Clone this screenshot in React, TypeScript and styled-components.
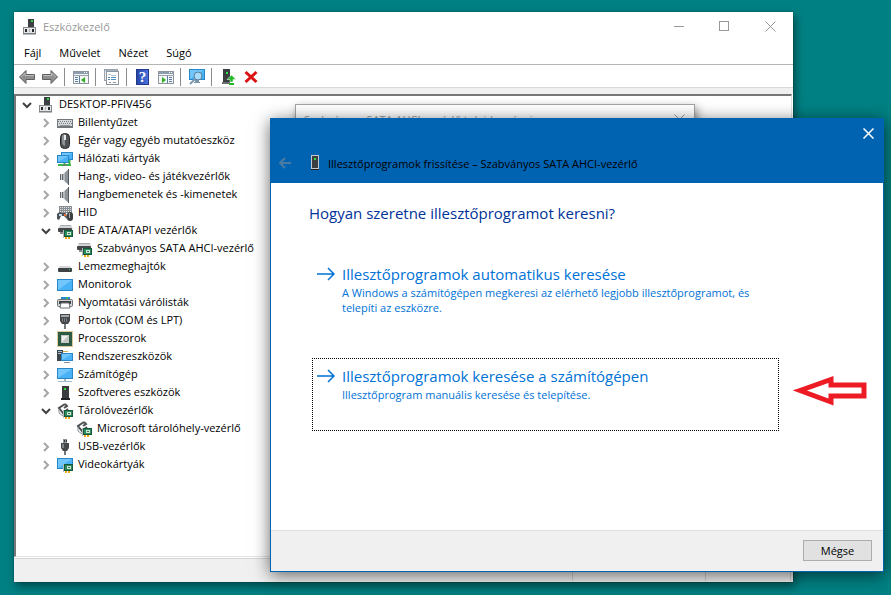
import React from "react";
import styled, { createGlobalStyle, css } from "styled-components";

const GlobalStyle = createGlobalStyle`
  * { box-sizing: border-box; }
  body {
    margin: 0;
    font-family: "Open Sans", "Noto Sans", sans-serif;
    font-size: 11px;
    color: #000;
  }
  button {
    font: inherit;
    color: inherit;
    background: none;
    border: 0;
    padding: 0;
    margin: 0;
  }
`;

/* ---------- icons ---------- */

const Svg = styled.svg`
  display: block;
  flex: none;
`;

const Chip = () => (
  <>
    <path d="M6.500 7v8" stroke="#b4b9bd" />
    <rect x="7" y="7" width="9" height="7" fill="#17573b" />
    <rect x="8" y="8" width="7" height="5" fill="#2b8a5a" />
    <rect x="10" y="9" width="4" height="3" fill="#cfe6d9" />
    <rect x="11" y="10" width="2" height="1" fill="#3f6f57" />
    <path d="M8 14h2v2H8zM11 14h2v2h-2z" fill="#f3a712" />
  </>
);

const Pc = () => (
  <>
    <rect x="6" y="0" width="6" height="8" fill="#3c3f41" />
    <rect x="9" y="1" width="2" height="2" fill="#35d04a" />
    <path d="M1 8h13v2H1z" fill="#b9bcbf" />
    <rect x="1.500" y="8.500" width="12" height="6" fill="#e4e6e8" stroke="#85898c" />
    <path d="M3 10h2v3H3zM10 10h2v3h-2z" fill="#26282a" />
    <path d="M7 10h1v3H7z" fill="#a6a9ab" />
    <path d="M1 15h13" stroke="#77797b" />
  </>
);

const Screen = ({ x, y, w, h }: { x: number; y: number; w: number; h: number }) => (
  <>
    <rect x={x} y={y} width={w} height={h} fill="#2787c9" />
    <rect x={x + 1} y={y + 1} width={w - 2} height={h - 2} fill="#49b1f5" />
    <path d={`M${x + 1} ${y + 1}h${w - 2}L${x + 1} ${y + h - 1}z`} fill="#72c6fb" />
  </>
);

const Drive = () => (
  <>
    <path d="M3 2h11l2 4H1z" fill="#d2d4d6" />
    <path d="M3 2.500h11" stroke="#a9acaf" />
    <rect x="1" y="5" width="14" height="4" rx="1" fill="#43474a" />
    <path d="M3 9h3v2H3z" fill="#8a8e91" />
  </>
);

const Speaker = () => (
  <>
    <path d="M3 5h3v6H3z" fill="#5f6569" />
    <path d="M6 5l5-4v14l-5-4z" fill="#b3b8bb" />
    <path d="M8 3.500L12 0v16l-4-3.500z" fill="#8d9397" />
    <path d="M11 0h1v16h-1z" fill="#565c60" />
    <path d="M4.500 5v6" stroke="#cfd3d5" />
  </>
);

const Storage = () => (
  <>
    <path d="M8 1L2 5l4 5 5-4M8 1l2 2-3 2" fill="none" stroke="#4e5254" strokeWidth="2" />
    <path d="M2 6v4l4 3" fill="none" stroke="#8a8e91" strokeWidth="1" />
    <Chip />
  </>
);

const Grille = ({ flip }: { flip?: boolean }) => (
  <>
    <rect x="0.500" y="2.500" width="15" height="12" fill="#f4f6f8" stroke="#8c959e" />
    <path d="M1 3h14v2H1z" fill="#8c9db0" />
    <path d="M11 3h1v1h-1zM13 3h1v1h-1z" fill="#fff" />
    <path d="M1 6.500h14" stroke="#9aa3ab" />
    {flip ? (
      <>
        <path d="M9.500 7v7M11 8.500h3M11 10.500h3M11 12.500h3" stroke="#5d7ea3" />
        <path d="M4 8l4 3-4 3z" fill="#2fae1f" />
      </>
    ) : (
      <>
        <path d="M6.500 7v7M2 8.500h3M2 10.500h3M2 12.500h3" stroke="#5d7ea3" />
        <path d="M12 8l-4 3 4 3z" fill="#2fae1f" />
      </>
    )}
  </>
);

const drawings: Record<string, React.ReactNode> = {
  pc: <Pc />,
  keyboard: (
    <>
      <rect x="0" y="4" width="16" height="9" fill="#72777b" />
      <rect x="1" y="5" width="14" height="6" fill="#d7dadc" />
      <path d="M1 6.500h14M2 8.500h13" stroke="#747a7e" strokeDasharray="1 1" />
      <path d="M3 10.500h10" stroke="#8f9498" />
    </>
  ),
  mouse: (
    <>
      <rect x="3.500" y="0.500" width="9" height="15" rx="4" fill="#4f5356" stroke="#26292b" />
      <path d="M5 3q1-2 3-2v12q-2 0-3-3z" fill="#8d9295" />
      <rect x="7" y="2" width="2" height="5" fill="#e6e8e9" />
    </>
  ),
  network: (
    <>
      <Screen x={4} y={1} w={12} h={8} />
      <Screen x={0} y={4} w={12} h={8} />
      <path d="M1 14h13M7.500 12v3M12.500 9v5" stroke="#38b54a" strokeWidth="2" />
      <path d="M6 13h4v2H6z" fill="#5e8f66" />
    </>
  ),
  sound: <Speaker />,
  hid: (
    <>
      <rect x="2" y="1" width="13" height="7" fill="#888d91" />
      <path d="M3 2.500h12M3 4.500h12M3 6.500h12" stroke="#e4e6e7" strokeDasharray="1 1" />
      <path d="M0 14V9q2-3 5-1h3q2 0 2 6l-3-3H4l-2 4z" fill="#4b5154" />
      <path d="M2 9h3v2H2z" fill="#b8d7ef" />
      <path d="M7 9h2v2H7z" fill="#e86e2f" />
      <rect x="10" y="7" width="6" height="9" rx="3" fill="#3c4042" />
      <path d="M12 8h1v5h-1z" fill="#a7acaf" />
    </>
  ),
  ide: (
    <>
      <Drive />
      <Chip />
    </>
  ),
  disk: (
    <>
      <path d="M3 7h10l2 3H1z" fill="#d4d6d8" />
      <rect x="1" y="9" width="14" height="4" rx="1" fill="#3e4244" />
      <rect x="12" y="10" width="1" height="1" fill="#37d64d" />
    </>
  ),
  monitor: <Screen x={0} y={2} w={16} h={12} />,
  printer: (
    <>
      <path d="M4 2h9v3H4z" fill="#2485d4" />
      <path d="M9 2h2v3H9z" fill="#36b765" />
      <rect x="0.500" y="4.500" width="15" height="7" rx="1" fill="#cfd2d4" stroke="#6e7376" />
      <path d="M2 6h12v3H2z" fill="#3b3f42" />
      <path d="M4 8h8l1 5H3z" fill="#fff" stroke="#6e7376" />
    </>
  ),
  port: (
    <>
      <path d="M3 1h10v7l-2 3H5L3 8z" fill="#44484b" />
      <path d="M4 2h8v2H4z" fill="#a3a8ab" />
      <path d="M5 5h1v4H5zM7 5h1v4H7zM9 5h1v4H9z" fill="#777c80" />
      <path d="M7 11h2v5H7z" fill="#767b7e" />
    </>
  ),
  cpu: (
    <>
      <rect x="0.500" y="0.500" width="15" height="15" fill="none" stroke="#b8973b" strokeDasharray="1 1" />
      <rect x="1" y="1" width="14" height="14" fill="#2c5a42" />
      <rect x="4" y="4" width="8" height="8" fill="#c5c9c5" />
      <path d="M5 5h6L5 11z" fill="#eef0ee" />
    </>
  ),
  system: (
    <>
      <path d="M0 1h6v11H0z" fill="#3f464b" />
      <path d="M1 2h4v1H1zM1 4h4v1H1z" fill="#a9c0d0" />
      <path d="M6 2h5v1H6z" fill="#d1b056" />
      <Screen x={4} y={4} w={12} h={8} />
      <path d="M7 13.500h6" stroke="#879199" />
    </>
  ),
  computer: (
    <>
      <Screen x={0} y={1} w={16} h={11} />
      <path d="M7 12h2v2H7z" fill="#a9b6c0" />
      <path d="M1 14.500h14" stroke="#a3bdd0" />
    </>
  ),
  tower: (
    <>
      <rect x="5" y="1" width="7" height="12" fill="#383c3e" />
      <rect x="7" y="3" width="2" height="2" fill="#35dd3c" />
      <path d="M4 13h9v2H4z" fill="#202224" />
    </>
  ),
  storage: <Storage />,
  usb: (
    <>
      <path d="M6 0h4v5H6z" fill="#8e9396" />
      <path d="M7 1h1v2H7zM9 1h1v2H9z" fill="#2e3234" />
      <path d="M4 4h8v5l-2 3H6L4 9z" fill="#44484b" />
      <path d="M5 5h2v4H5z" fill="#7e8386" />
      <path d="M7 12h2v4H7z" fill="#707578" />
    </>
  ),
  video: (
    <>
      <Screen x={0} y={1} w={16} h={11} />
      <Chip />
    </>
  ),
  back: (
    <>
      <path d="M0.500 8L7 1.500v4h8.500v5H7v4z" fill="#8f8f8f" stroke="#5e5e5e" />
      <path d="M2 8l4-4v2.500h9" fill="none" stroke="#bdbdbd" />
    </>
  ),
  forward: (
    <>
      <path d="M15.500 8L9 1.500v4H0.500v5H9v4z" fill="#8f8f8f" stroke="#5e5e5e" />
      <path d="M1 6.500h8.500V4l4 4" fill="none" stroke="#bdbdbd" />
    </>
  ),
  pane: <Grille />,
  paneRight: <Grille flip />,
  properties: (
    <>
      <rect x="0.500" y="0.500" width="13" height="11" fill="#eef1f4" stroke="#9ba2a9" />
      <path d="M1 1.500h12" stroke="#9fb2c6" />
      <rect x="2.500" y="2.500" width="12" height="13" fill="#fff" stroke="#8d949b" />
      <path d="M4 5h3v1H4zM7 6h5v1H7z" fill="#b5bfc9" />
      <path d="M4 8h2v1H4zM7 8h5v1H7zM4 10h2v1H4zM7 10h5v1H7z" fill="#4f8fbf" />
      <path d="M5 13h2v1H5zM9 13h3v1H9z" fill="#8a949c" />
    </>
  ),
  scan: (
    <>
      <Screen x={0} y={0} w={16} h={11} />
      <path d="M6 11h4v2H6z" fill="#7a96aa" />
      <path d="M5 13.500h6" stroke="#7a96aa" />
      <circle cx="9" cy="7" r="4" fill="#a9dcfb" stroke="#5a7f99" />
      <path d="M6 10L1 15" stroke="#7c99ae" strokeWidth="2" />
    </>
  ),
  update: (
    <>
      <rect x="3" y="0" width="7" height="13" fill="#393d3f" />
      <rect x="6" y="3" width="2" height="2" fill="#33e03c" />
      <path d="M2 13h8v2H2z" fill="#6a6e70" />
      <path d="M11.500 6L16 10.500h-3V13h-3v-2.500H7z" fill="#23b825" stroke="#fff" strokeWidth="0.500" />
      <path d="M9 14h5v2H9z" fill="#23b825" />
    </>
  ),
  remove: <path d="M2.500 3l11 10M13.500 3l-11 10" stroke="#dc1212" strokeWidth="3" />,
};

const Icon = ({ name }: { name: string }) => (
  <Svg width="16" height="16" viewBox="0 0 16 16" aria-hidden="true">
    {drawings[name]}
  </Svg>
);

const HelpBadge = styled.span`
  width: 13px;
  height: 16px;
  background: linear-gradient(90deg, #2747a8, #4a72dc);
  border: 1px solid #23398a;
  color: #fff;
  font: bold 15px/14px "Liberation Serif", serif;
  text-align: center;
`;

const CloseGlyph = ({ bold }: { bold?: boolean }) => (
  <Svg width="11" height="11" viewBox="0 0 11 11" aria-hidden="true">
    <path d="M0.500 0.500l10 10M10.500 0.500l-10 10" stroke="currentColor" strokeWidth={bold ? 1.5 : 1} />
  </Svg>
);

/* ---------- windows ---------- */

const Desktop = styled.main`
  position: relative;
  min-height: 100vh;
  overflow: hidden;
  background: #008083;
`;

const Manager = styled.section`
  position: absolute;
  inset: 12px 98px 13px 14px;
  display: flex;
  flex-direction: column;
  background: #fff;
  box-shadow: 0 0 1px #0008, 2px 4px 9px #0007;
`;

const TitleBar = styled.header`
  display: flex;
  align-items: center;
  height: 29px;
  padding-left: 8px;
  color: #999;
`;

const Caption = styled.h1`
  flex: 1;
  margin: 0 0 0 5px;
  font-size: 11px;
  font-weight: 400;
  white-space: nowrap;
`;

const WindowButton = styled.button`
  display: flex;
  align-items: center;
  justify-content: center;
  width: 45px;
  height: 29px;
  &:last-child { width: 46px; }
`;

const MenuBar = styled.nav`
  display: flex;
  height: 24px;
  padding-left: 1px;
  border-bottom: 1px solid #b4b4b4;
`;

const MenuItem = styled.button`
  padding: 0 9px;
`;

const Toolbar = styled.div`
  display: flex;
  align-items: center;
  height: 23px;
  padding: 2px 0 0 1px;
  border-bottom: 1px solid #d9d9d9;
`;

const ToolButton = styled.button`
  display: flex;
  align-items: center;
  justify-content: center;
  width: 23px;
  height: 20px;
`;

const ToolDivider = styled.span`
  width: 1px;
  height: 18px;
  margin: 0 4px 0 3px;
  background: #8c8c8c;
`;

const Backdrop = styled.div`
  flex: 1;
  min-height: 0;
  display: flex;
  flex-direction: column;
  background: linear-gradient(#f0f0f0 0 6px, #fff 6px);
`;

const TreeFrame = styled.div`
  flex: 1;
  min-height: 0;
  overflow: hidden;
  margin: 6px 1px 0 0;
  border: 1px solid #e3e3e3;
  border-top: 2px solid #777;
  border-left: 2px solid #777;
`;

const Tree = styled.ul`
  list-style: none;
  margin: 0;
  padding: 0;
`;

const TreeRow = styled.li<{ $level: number }>`
  display: flex;
  align-items: center;
  height: 18px;
  padding-left: ${(p) => 2 + p.$level * 19}px;
  white-space: nowrap;
`;

const Expander = styled.button`
  display: flex;
  justify-content: center;
  width: 18px;
  margin-right: 2px;
`;

const ExpanderGap = styled.span`
  width: 20px;
`;

const TreeLabel = styled.span`
  margin-left: 5px;
  padding-bottom: 2px;
  line-height: 16px;
`;

const StatusBar = styled.footer`
  display: flex;
  height: 24px;
  margin-top: 1px;
  background: #f0f0f0;
  border-top: 1px solid #d7d7d7;
`;

const StatusCell = styled.span<{ $width?: number }>`
  ${(p) => (p.$width ? css`width: ${p.$width}px;` : css`flex: 1;`)}
  margin-bottom: 1px;
  border-right: 1px solid #d0d0d0;
`;

const StatusEnd = styled.span`
  width: 2px;
`;

const Properties = styled.section`
  position: absolute;
  inset: 104px 196px 60px 295px;
  background: #fff;
  border: 1px solid #a3a3a3;
  box-shadow: 2px 4px 9px #0007;
`;

const PropertiesTitle = styled.div`
  display: flex;
  align-items: center;
  justify-content: space-between;
  height: 29px;
  padding: 0 9px 0 8px;
  color: #999;
  white-space: nowrap;
`;

const Wizard = styled.section`
  position: absolute;
  inset: 118px 7px 23px 270px;
  display: flex;
  flex-direction: column;
  background: #fff;
  border: 1px solid #0063b1;
  box-shadow: 0 3px 16px #0009;
`;

const WizardHeader = styled.header`
  background: #0063b1;
  height: 64px;
`;

const WizardTop = styled.div`
  display: flex;
  justify-content: flex-end;
  height: 28px;
  color: #fff;
`;

const WizardClose = styled.button`
  display: flex;
  align-items: center;
  justify-content: center;
  width: 29px;
`;

const WizardTitleRow = styled.div`
  display: flex;
  align-items: center;
  height: 32px;
  padding-left: 8px;
`;

const WizardIcon = styled.span`
  display: flex;
  margin: 0 8px 0 20px;
`;

const WizardTitle = styled.h2`
  margin: 0;
  font-size: 11px;
  font-weight: 400;
  white-space: nowrap;
`;

const WizardBody = styled.div`
  flex: 1;
  padding: 19px 104px 0 38px;
`;

const Question = styled.h3`
  margin: 0 0 32px;
  font-size: 15px;
  line-height: 22px;
  font-weight: 400;
  color: #003399;
`;

const Choice = styled.button<{ $focused?: boolean }>`
  display: grid;
  grid-template-columns: 25px 1fr;
  align-content: start;
  width: calc(100% - 3px);
  min-height: 73px;
  margin: 0 0 29px 3px;
  padding: 6px 4px;
  border: 1px dotted ${(p) => (p.$focused ? "#000" : "transparent")};
  color: #0072d6;
  text-align: left;
  outline: none;
`;

const ChoiceTitle = styled.span`
  font-size: 15px;
  line-height: 22px;
`;

const ChoiceText = styled.span`
  grid-column: 2;
  line-height: 15px;
`;

const ChoiceArrow = styled(Svg)`
  align-self: center;
`;

const WizardFooter = styled.footer`
  display: flex;
  align-items: center;
  justify-content: flex-end;
  height: 41px;
  padding: 0 11px 2px 0;
  background: #f0f0f0;
  border-top: 1px solid #dfdfdf;
`;

const CancelButton = styled.button`
  width: 69px;
  height: 21px;
  background: #e1e1e1;
  border: 1px solid #adadad;
`;

const Pointer = styled(Svg)`
  position: absolute;
  top: 256px;
  right: 15px;
`;

type Node = { label: string; icon: string; level: number; open?: boolean; leaf?: boolean };

const nodes: Node[] = [
  { label: "DESKTOP-PFIV456", icon: "pc", level: 0, open: true },
  { label: "Billentyűzet", icon: "keyboard", level: 1 },
  { label: "Egér vagy egyéb mutatóeszköz", icon: "mouse", level: 1 },
  { label: "Hálózati kártyák", icon: "network", level: 1 },
  { label: "Hang-, video- és játékvezérlők", icon: "sound", level: 1 },
  { label: "Hangbemenetek és -kimenetek", icon: "sound", level: 1 },
  { label: "HID", icon: "hid", level: 1 },
  { label: "IDE ATA/ATAPI vezérlők", icon: "ide", level: 1, open: true },
  { label: "Szabványos SATA AHCI-vezérlő", icon: "ide", level: 2, leaf: true },
  { label: "Lemezmeghajtók", icon: "disk", level: 1 },
  { label: "Monitorok", icon: "monitor", level: 1 },
  { label: "Nyomtatási várólisták", icon: "printer", level: 1 },
  { label: "Portok (COM és LPT)", icon: "port", level: 1 },
  { label: "Processzorok", icon: "cpu", level: 1 },
  { label: "Rendszereszközök", icon: "system", level: 1 },
  { label: "Számítógép", icon: "computer", level: 1 },
  { label: "Szoftveres eszközök", icon: "tower", level: 1 },
  { label: "Tárolóvezérlők", icon: "storage", level: 1, open: true },
  { label: "Microsoft tárolóhely-vezérlő", icon: "storage", level: 2, leaf: true },
  { label: "USB-vezérlők", icon: "usb", level: 1 },
  { label: "Videokártyák", icon: "video", level: 1 },
];

const tools = [
  ["back", "Vissza"],
  ["forward", "Előre"],
  null,
  ["pane", "Konzolfa"],
  null,
  ["properties", "Tulajdonságok"],
  null,
  ["help", "Súgó"],
  ["paneRight", "Műveletpanel"],
  null,
  ["scan", "Hardverváltozások keresése"],
  null,
  ["update", "Illesztőprogram frissítése"],
  ["remove", "Eszköz eltávolítása"],
];

const Chevron = ({ open }: { open?: boolean }) => (
  <Svg width="10" height="10" viewBox="0 0 10 10" aria-hidden="true">
    {open ? (
      <path d="M1 3l4 4 4-4" fill="none" stroke="#404040" strokeWidth="2" />
    ) : (
      <path d="M3 1l4 4-4 4" fill="none" stroke="#a6a6a6" strokeWidth="2" />
    )}
  </Svg>
);

const RightArrow = () => (
  <ChoiceArrow width="18" height="14" viewBox="0 0 18 14" aria-hidden="true">
    <path d="M0 7h17M11 1l6 6-6 6" fill="none" stroke="#0072d6" strokeWidth="1.500" />
  </ChoiceArrow>
);

export default function App() {
  return (
    <Desktop>
      <GlobalStyle />
      <Manager>
        <TitleBar>
          <Icon name="pc" />
          <Caption>Eszközkezelő</Caption>
          <WindowButton aria-label="Kis méret">
            <Svg width="11" height="11" viewBox="0 0 11 11">
              <path d="M0 5.500h10" stroke="currentColor" />
            </Svg>
          </WindowButton>
          <WindowButton aria-label="Teljes méret">
            <Svg width="11" height="11" viewBox="0 0 11 11">
              <rect x="0.500" y="0.500" width="9" height="9" fill="none" stroke="currentColor" />
            </Svg>
          </WindowButton>
          <WindowButton aria-label="Bezárás">
            <CloseGlyph />
          </WindowButton>
        </TitleBar>
        <MenuBar>
          <MenuItem>Fájl</MenuItem>
          <MenuItem>Művelet</MenuItem>
          <MenuItem>Nézet</MenuItem>
          <MenuItem>Súgó</MenuItem>
        </MenuBar>
        <Toolbar>
          {tools.map((tool, i) =>
            tool ? (
              <ToolButton key={i} aria-label={tool[1]}>
                {tool[0] === "help" ? <HelpBadge>?</HelpBadge> : <Icon name={tool[0]} />}
              </ToolButton>
            ) : (
              <ToolDivider key={i} />
            )
          )}
        </Toolbar>
        <Backdrop>
          <TreeFrame>
            <Tree>
              {nodes.map((node) => (
                <TreeRow key={node.label} $level={node.level}>
                  {node.leaf ? (
                    <ExpanderGap />
                  ) : (
                    <Expander aria-label={node.label} aria-expanded={!!node.open}>
                      <Chevron open={node.open} />
                    </Expander>
                  )}
                  <Icon name={node.icon} />
                  <TreeLabel>{node.label}</TreeLabel>
                </TreeRow>
              ))}
            </Tree>
          </TreeFrame>
        </Backdrop>
        <StatusBar>
          <StatusCell />
          <StatusCell $width={133} />
          <StatusCell $width={85} />
          <StatusEnd />
        </StatusBar>
      </Manager>

      <Properties>
        <PropertiesTitle>
          <span>Szabványos SATA AHCI-vezérlő tulajdonságai</span>
          <button aria-label="Tulajdonságok bezárása">
            <CloseGlyph />
          </button>
        </PropertiesTitle>
      </Properties>

      <Wizard>
        <WizardHeader>
          <WizardTop>
            <WizardClose aria-label="Varázsló bezárása">
              <CloseGlyph bold />
            </WizardClose>
          </WizardTop>
          <WizardTitleRow>
            <button aria-label="Előző lap">
              <Svg width="12" height="12" viewBox="0 0 12 12">
                <path d="M12 6H1M6 1L1 6l5 5" fill="none" stroke="#4a7ba3" strokeWidth="2" />
              </Svg>
            </button>
            <WizardIcon>
              <Svg width="9" height="16" viewBox="0 0 9 16">
                <rect x="0.500" y="0.500" width="7" height="13" fill="#3b3f41" stroke="#c3c9cd" />
                <rect x="3" y="3" width="2" height="2" fill="#35e03c" />
                <path d="M0 14h8v1H0z" fill="#1f2224" />
              </Svg>
            </WizardIcon>
            <WizardTitle>Illesztőprogramok frissítése – Szabványos SATA AHCI-vezérlő</WizardTitle>
          </WizardTitleRow>
        </WizardHeader>
        <WizardBody>
          <Question>Hogyan szeretne illesztőprogramot keresni?</Question>
          <Choice>
            <RightArrow />
            <ChoiceTitle>Illesztőprogramok automatikus keresése</ChoiceTitle>
            <ChoiceText>
              A Windows a számítógépen megkeresi az elérhető legjobb illesztőprogramot, és telepíti az eszközre.
            </ChoiceText>
          </Choice>
          <Choice $focused>
            <RightArrow />
            <ChoiceTitle>Illesztőprogramok keresése a számítógépen</ChoiceTitle>
            <ChoiceText>Illesztőprogram manuális keresése és telepítése.</ChoiceText>
          </Choice>
        </WizardBody>
        <WizardFooter>
          <CancelButton>Mégse</CancelButton>
        </WizardFooter>
        <Pointer width="75" height="31" viewBox="0 0 75 31" aria-hidden="true">
          <path
            d="M7 15.500L38 4.500V10h33v11H38v6z"
            fill="none"
            stroke="#ed1c24"
            strokeWidth="5"
            strokeLinejoin="miter"
          />
        </Pointer>
      </Wizard>
    </Desktop>
  );
}
